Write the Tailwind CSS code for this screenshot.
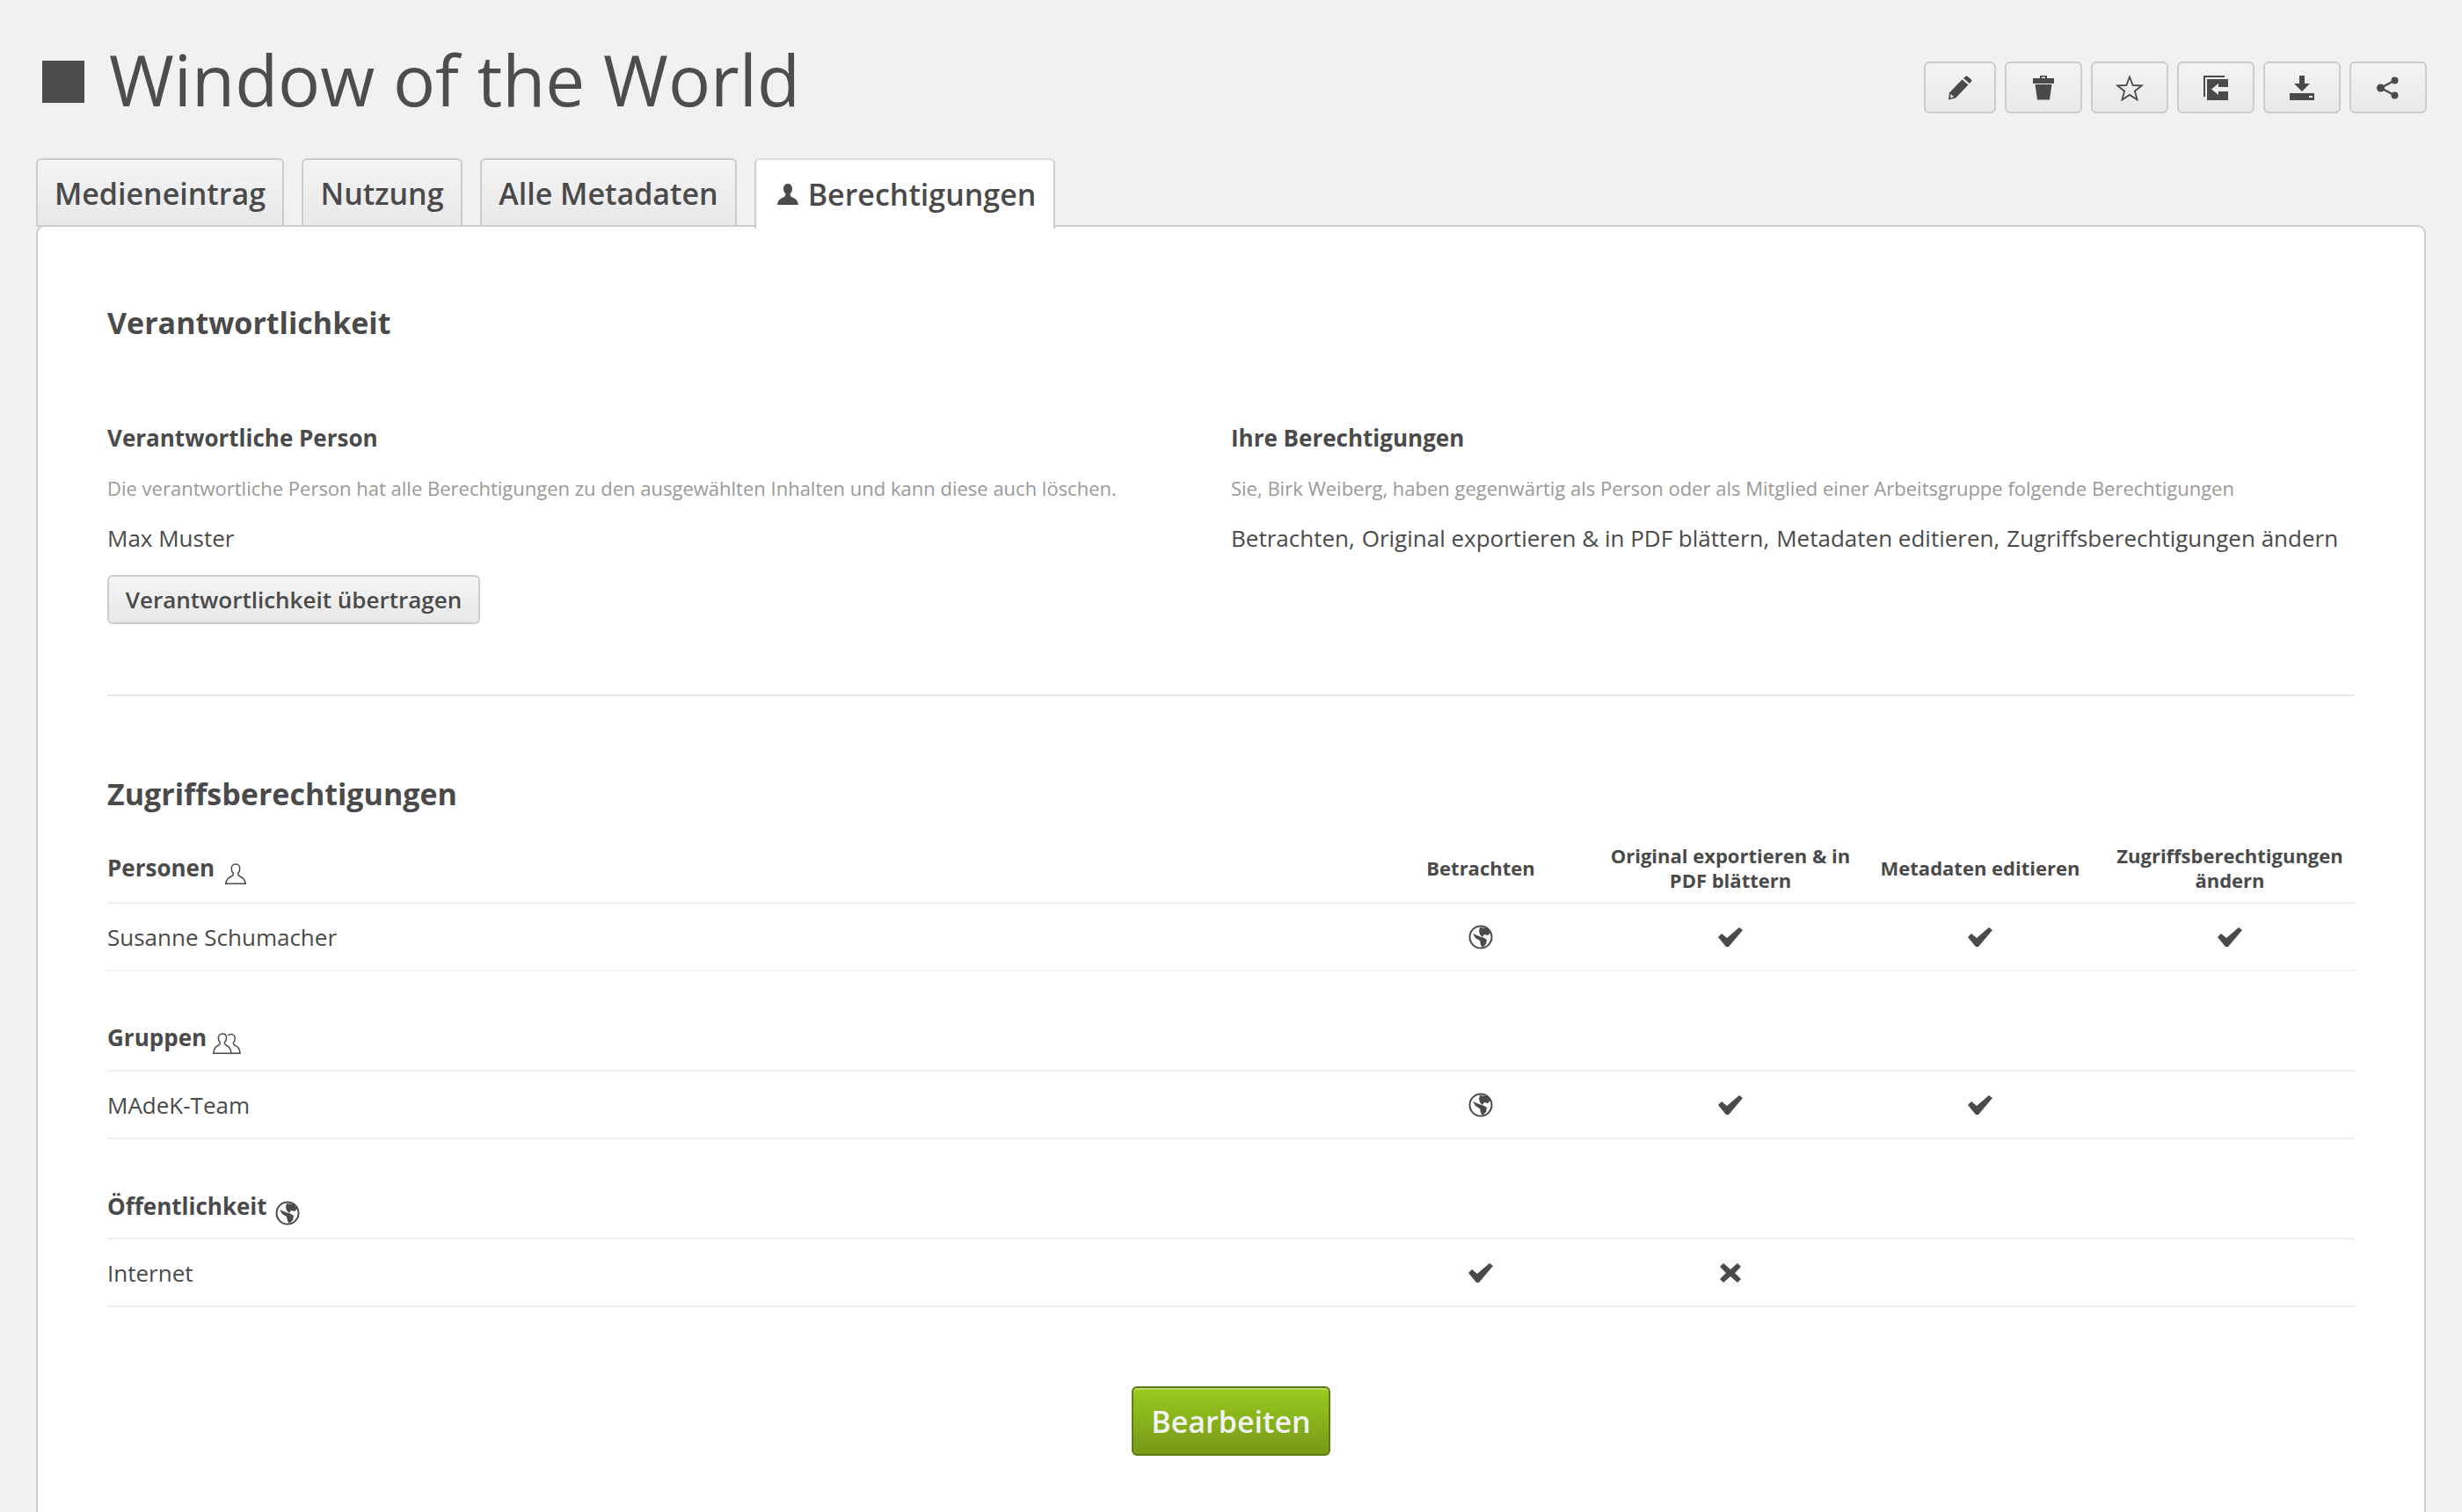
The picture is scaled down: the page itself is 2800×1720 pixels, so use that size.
<!doctype html>
<html lang="de">
<head>
  <meta charset="utf-8">
  <title>Window of the World</title>
  <script src="https://cdn.jsdelivr.net/npm/@tailwindcss/browser@4"></script>
</head>
<body class="h-[1720px] overflow-hidden bg-[#f1f1f1] bg-[repeating-linear-gradient(90deg,#f3f3f3_0px,#efefef_2px,#f3f3f3_4px)] font-['Open_Sans',sans-serif] text-[#4a4a4a]">

<!-- Title + actions -->
<header class="flex h-[180px] justify-between pl-[48px] pr-[40px]">
  <div class="flex h-[186px] items-start">
    <div class="mt-[69px] h-[48px] w-[48px] bg-[#4d4d4d]"></div>
    <h1 class="ml-[28px] mt-[35px] text-[80px] leading-[110px] font-normal text-[#4d4d4d]">Window of the World</h1>
  </div>
  <div class="mt-[70px] flex h-[59px] gap-[10px]">
    <button class="flex w-[82px] items-center justify-center rounded-[6px] border-2 border-[#ccc] bg-linear-to-b from-[#f4f4f4] to-[#e8e8e8]">
      <svg width="28" height="28" viewBox="0 0 28 28" fill="#4a4a4a"><path d="M1 27.500L2 19.500 16.500 4.500 23.500 10.500 9 25.500z"/><path d="M18 3L20.500.8Q21.500 0 22.500.8L27 4.500Q28 5.500 27 6.500L25 9z"/><path d="M3.500 21L7 24 3.200 25.500z" fill="#f0f0f0"/></svg>
    </button>
    <button class="flex w-[88px] items-center justify-center rounded-[6px] border-2 border-[#ccc] bg-linear-to-b from-[#f4f4f4] to-[#e8e8e8]">
      <svg width="26" height="28" viewBox="0 0 26 28" fill="#4a4a4a"><path fill-rule="evenodd" d="M9 0h8v3h8v6H1V3h8zM11 1.500V3h4V1.500z"/><path d="M3.500 10h19L20 27.500H6z"/></svg>
    </button>
    <button class="flex w-[88px] items-center justify-center rounded-[6px] border-2 border-[#ccc] bg-linear-to-b from-[#f4f4f4] to-[#e8e8e8]">
      <svg width="32" height="30" viewBox="0 0 32 30" fill="none" stroke="#4a4a4a" stroke-width="1.800"><path d="M16 2.500l3.700 9.500 10 .4-7.800 6.300 2.700 9.800-8.600-5.600-8.600 5.600 2.700-9.800-7.800-6.300 10-.4z"/></svg>
    </button>
    <button class="flex w-[88px] items-center justify-center rounded-[6px] border-2 border-[#ccc] bg-linear-to-b from-[#f4f4f4] to-[#e8e8e8]">
      <svg width="28" height="28" viewBox="0 0 28 28" fill="#4a4a4a"><path d="M0 0h24v2H2v22H0z"/><path d="M4 4h24v9H17V9l-8 6.500 8 6.500v-4h11v10H4z"/></svg>
    </button>
    <button class="flex w-[88px] items-center justify-center rounded-[6px] border-2 border-[#ccc] bg-linear-to-b from-[#f4f4f4] to-[#e8e8e8]">
      <svg width="28" height="28" viewBox="0 0 28 28" fill="#4a4a4a"><path d="M11 0h6v9h6l-9 9-9-9h6z"/><path fill-rule="evenodd" d="M0 20h28v8H0zM22 23v2h4v-2z"/></svg>
    </button>
    <button class="flex w-[88px] items-center justify-center rounded-[6px] border-2 border-[#ccc] bg-linear-to-b from-[#f4f4f4] to-[#e8e8e8]">
      <svg width="26" height="26" viewBox="0 0 26 26" fill="#4a4a4a"><circle cx="4.500" cy="13" r="4.500"/><circle cx="20.500" cy="4.500" r="4"/><circle cx="20.500" cy="21.500" r="4"/><path d="M4.500 13L20.500 4.500M4.500 13l16 8.500" stroke="#4a4a4a" stroke-width="2.500"/></svg>
    </button>
  </div>
</header>

<!-- Tabs -->
<nav class="relative z-10 ml-[41px] flex h-[78px] items-start gap-[20px] text-[34px] leading-[50px] font-semibold">
  <a class="flex h-[78px] w-[282px] items-center justify-center rounded-t-[6px] border-2 border-[#ccc] bg-linear-to-b from-[#f4f4f4] to-[#e8e8e8] pt-[2px]">Medieneintrag</a>
  <a class="flex h-[78px] w-[183px] items-center justify-center rounded-t-[6px] border-2 border-[#ccc] bg-linear-to-b from-[#f4f4f4] to-[#e8e8e8] pt-[2px]">Nutzung</a>
  <a class="flex h-[78px] w-[292px] items-center justify-center rounded-t-[6px] border-2 border-[#ccc] bg-linear-to-b from-[#f4f4f4] to-[#e8e8e8] pt-[2px]">Alle Metadaten</a>
  <a class="flex h-[80px] w-[342px] items-center justify-center gap-[10px] rounded-t-[6px] border-2 border-b-0 border-[#ccc] border-t-[#ddd] bg-white pl-[3px]">
    <svg width="26" height="24" viewBox="0 0 26 24" fill="#4a4a4a"><path d="M13 0c3.200 0 5 2.500 5 5.500 0 2.500-1 4.800-2.500 6 0 1.500.5 3 2.500 4 3 1.200 6 2.500 7 8.500H1c1-6 4-7.300 7-8.500 2-1 2.500-2.500 2.500-4C9 10.300 8 8 8 5.500 8 2.500 9.800 0 13 0z"/></svg>
    Berechtigungen
  </a>
</nav>

<!-- Card -->
<main class="mx-[41px] -mt-[2px] h-[1500px] rounded-t-[10px] border-2 border-[#ccc] bg-white px-[79px] pt-[84px]">
  <h2 class="text-[34px] leading-[50px] font-bold">Verantwortlichkeit</h2>

  <div class="mt-[86px] grid grid-cols-2">
    <div>
      <h3 class="text-[26px] leading-[40px] font-bold">Verantwortliche Person</h3>
      <p class="mt-[20px] text-[22px] leading-[34px] text-[#999]">Die verantwortliche Person hat alle Berechtigungen zu den ausgewählten Inhalten und kann diese auch löschen.</p>
      <p class="mt-[20px] text-[26px] leading-[40px]">Max Muster</p>
      <button class="mt-[22px] h-[56px] w-[424px] rounded-[6px] border-2 border-[#ccc] bg-linear-to-b from-[#f4f4f4] to-[#e8e8e8] text-[26px] font-semibold">Verantwortlichkeit übertragen</button>
    </div>
    <div>
      <h3 class="text-[26px] leading-[40px] font-bold">Ihre Berechtigungen</h3>
      <p class="mt-[20px] text-[22px] leading-[34px] text-[#999]">Sie, Birk Weiberg, haben gegenwärtig als Person oder als Mitglied einer Arbeitsgruppe folgende Berechtigungen</p>
      <p class="mt-[20px] flex gap-[8px] text-[26px] leading-[40px] whitespace-nowrap"><span>Betrachten,</span><span>Original exportieren &amp; in PDF blättern,</span><span>Metadaten editieren,</span><span>Zugriffsberechtigungen ändern</span></p>
    </div>
  </div>

  <hr class="mt-[80px] border-t-2 border-[#e6e6e6]">

  <h2 class="mt-[86px] text-[34px] leading-[50px] font-bold">Zugriffsberechtigungen</h2>

  <!-- Permissions table -->
  <table class="mt-[17px] w-full table-fixed border-collapse">
    <colgroup><col><col class="w-[284px]"><col class="w-[284px]"><col class="w-[284px]"><col class="w-[284px]"></colgroup>
    <tbody>
      <tr class="h-[82px] border-b-2 border-[#f0f0f0] align-middle">
        <th class="pt-[3px] text-left text-[26px] leading-[38px] font-bold">
          <span class="inline-flex items-end gap-[12px]">Personen
            <svg width="24" height="24" viewBox="0 0 24 24" fill="none" stroke="#4a4a4a" stroke-width="1.500"><path d="M12 1c3 0 4.800 2.300 4.800 5 0 2.300-1 4.500-2.300 5.600 0 1.500.5 2.600 2.300 3.400 3 1.300 5.500 2.500 6.400 8.200H.8c.9-5.700 3.400-6.900 6.400-8.200 1.800-.8 2.300-1.900 2.300-3.400C8.200 10.500 7.200 8.300 7.200 6 7.200 3.300 9 1 12 1z"/></svg>
          </span>
        </th>
        <th class="pt-[2px] text-center text-[22px] leading-[28px] font-bold">Betrachten</th>
        <th class="px-[4px] pt-[2px] text-center text-[22px] leading-[28px] font-bold">Original exportieren &amp; in PDF blättern</th>
        <th class="pt-[2px] text-center text-[22px] leading-[28px] font-bold">Metadaten editieren</th>
        <th class="pt-[2px] text-center text-[22px] leading-[28px] font-bold">Zugriffsberechtigungen ändern</th>
      </tr>
      <tr class="h-[77px] border-b-2 border-[#f0f0f0] text-[26px]">
        <td class="pt-[2px]">Susanne Schumacher</td>
        <td><svg class="mx-auto" width="28" height="28" viewBox="0 0 28 28"><circle cx="14" cy="14" r="12.500" fill="none" stroke="#4a4a4a" stroke-width="2"/><path fill="#4a4a4a" d="M13 3l8 1 4 5-3 3-4-1-2 3-3-3-1-4zM5 10l7 3 6 2 3 2-1 5-4 4-2-3-1-5-5-3z"/></svg></td>
        <td><svg class="mx-auto" width="28" height="22" viewBox="0 0 28 22" fill="#4a4a4a"><path d="M0 11l4-4 6 5L24 0l4 3-16 19h-3z"/></svg></td>
        <td><svg class="mx-auto" width="28" height="22" viewBox="0 0 28 22" fill="#4a4a4a"><path d="M0 11l4-4 6 5L24 0l4 3-16 19h-3z"/></svg></td>
        <td><svg class="mx-auto" width="28" height="22" viewBox="0 0 28 22" fill="#4a4a4a"><path d="M0 11l4-4 6 5L24 0l4 3-16 19h-3z"/></svg></td>
      </tr>
      <tr class="h-[114px] border-b-2 border-[#f0f0f0] align-bottom">
        <th class="pb-[18px] text-left text-[26px] leading-[38px] font-bold">
          <span class="inline-flex items-end gap-[7px]">Gruppen
            <svg width="32" height="24" viewBox="0 0 32 24" fill="none" stroke="#4a4a4a" stroke-width="1.500"><path d="M11 1c3 0 4.500 2.300 4.500 4.800 0 2.200-1 4.200-2.200 5.200 0 1.500.5 2.500 2.200 3.300 2.500 1.200 4.800 2.500 5.500 8.900H.8c.7-6.400 3-7.700 5.500-8.900C8 13.500 8.500 12.500 8.500 11c-1.200-1-2.200-3-2.200-5.200C6.300 3.300 8 1 11 1z"/><path d="M17 3c1-1 2.500-1.500 4-1.500 2.700 0 4.300 2.200 4.300 4.800 0 2-1 4-2 5 0 1.300.4 2.200 2 3 2.500 1.200 5 2.300 5.800 8.900H21"/></svg>
          </span>
        </th>
        <th colspan="4"></th>
      </tr>
      <tr class="h-[77px] border-b-2 border-[#f0f0f0] text-[26px]">
        <td class="pt-[2px]">MAdeK-Team</td>
        <td><svg class="mx-auto" width="28" height="28" viewBox="0 0 28 28"><circle cx="14" cy="14" r="12.500" fill="none" stroke="#4a4a4a" stroke-width="2"/><path fill="#4a4a4a" d="M13 3l8 1 4 5-3 3-4-1-2 3-3-3-1-4zM5 10l7 3 6 2 3 2-1 5-4 4-2-3-1-5-5-3z"/></svg></td>
        <td><svg class="mx-auto" width="28" height="22" viewBox="0 0 28 22" fill="#4a4a4a"><path d="M0 11l4-4 6 5L24 0l4 3-16 19h-3z"/></svg></td>
        <td><svg class="mx-auto" width="28" height="22" viewBox="0 0 28 22" fill="#4a4a4a"><path d="M0 11l4-4 6 5L24 0l4 3-16 19h-3z"/></svg></td>
        <td></td>
      </tr>
      <tr class="h-[114px] border-b-2 border-[#f0f0f0] align-bottom">
        <th class="pb-[17px] text-left text-[26px] leading-[38px] font-bold">
          <span class="inline-flex items-end gap-[9px]">Öffentlichkeit
            <svg class="mb-[-3px]" width="28" height="28" viewBox="0 0 28 28"><circle cx="14" cy="14" r="12.500" fill="none" stroke="#4a4a4a" stroke-width="2"/><path fill="#4a4a4a" d="M13 3l8 1 4 5-3 3-4-1-2 3-3-3-1-4zM5 10l7 3 6 2 3 2-1 5-4 4-2-3-1-5-5-3z"/></svg>
          </span>
        </th>
        <th colspan="4"></th>
      </tr>
      <tr class="h-[77px] border-b-2 border-[#f0f0f0] text-[26px]">
        <td class="pt-[2px]">Internet</td>
        <td><svg class="mx-auto" width="28" height="22" viewBox="0 0 28 22" fill="#4a4a4a"><path d="M0 11l4-4 6 5L24 0l4 3-16 19h-3z"/></svg></td>
        <td><svg class="mx-auto" width="24" height="22" viewBox="0 0 24 22" fill="#4a4a4a"><path d="M0 4l4-4 8 7 8-7 4 4-7 7 7 7-4 4-8-7-8 7-4-4 7-7z"/></svg></td>
        <td></td>
        <td></td>
      </tr>
    </tbody>
  </table>

  <div class="mt-[90px] flex justify-center">
    <button class="h-[79px] w-[226px] rounded-[6px] border-2 border-[#5f7d12] bg-linear-to-b from-[#9aca1e] to-[#759a18] pt-[2px] text-[34px] font-semibold text-[#f2f2f2] shadow-[inset_0_2px_0_#b5d86a]">Bearbeiten</button>
  </div>
</main>
</body>
</html>
